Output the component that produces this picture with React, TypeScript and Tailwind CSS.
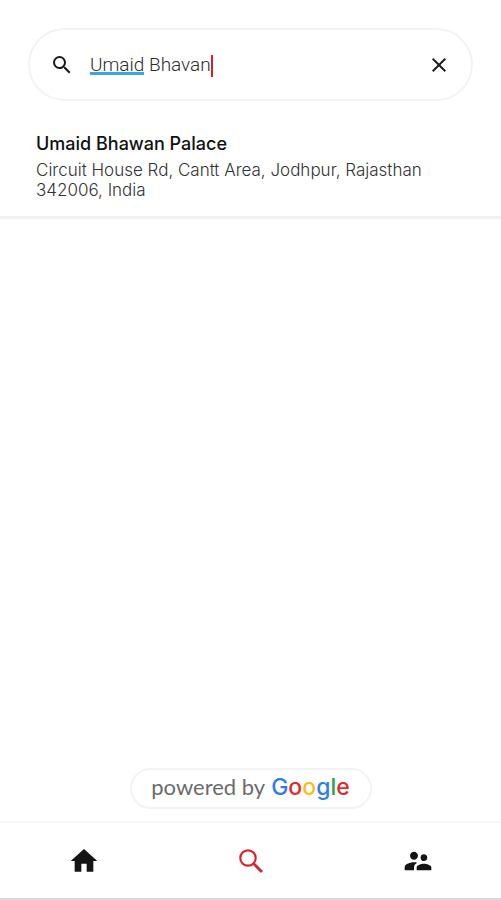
import { useState } from "react";
import { MdClose, MdHome, MdSearch, MdSupervisorAccount } from "react-icons/md";

const places = [
    {
        name: "Umaid Bhawan Palace",
        address: "Circuit House Rd, Cantt Area, Jodhpur, Rajasthan 342006, India",
    },
];

function SearchBar() {
    const [query, setQuery] = useState("Umaid Bhavan");
    const [first, ...rest] = query.split(" ");

    return (
        <form
            className="mx-7 mt-7 flex h-[73px] items-center rounded-full border-2 border-[#f3f3f3] px-5"
            onSubmit={(e) => e.preventDefault()}
        >
            <MdSearch className="size-6 shrink-0 text-[#1a1a1a]" />
            <div className="relative ml-4 h-7 min-w-0 flex-1 font-['Roboto',sans-serif] text-[19px] leading-7 font-light">
                <input
                    aria-label="Search for a place"
                    className="block h-7 w-full bg-transparent text-[#2c2c2c] caret-[#d8202c] outline-none"
                    onChange={(e) => setQuery(e.target.value)}
                    type="text"
                    value={query}
                />
                {/* spelling mark and caret, laid over the typed text */}
                <div aria-hidden="true" className="pointer-events-none absolute inset-0 flex whitespace-pre">
                    <span className="relative text-transparent">
                        {first}
                        <span className="absolute inset-x-0 bottom-1 h-[3px] bg-[#35a9e6]" />
                    </span>
                    <span className="text-transparent">{rest.length > 0 && ` ${rest.join(" ")}`}</span>
                    <span className="mt-1 h-[22px] w-[2px] bg-[#d8202c]" />
                </div>
            </div>
            <button aria-label="Clear" onClick={() => setQuery("")} type="button">
                <MdClose className="size-6 text-[#1f1f1f]" />
            </button>
        </form>
    );
}

function PoweredByGoogle() {
    return (
        <div className="mx-auto mb-3 flex h-[41px] w-[242px] items-center justify-center rounded-full border-2 border-[#f3f3f3] pb-1">
            <p className="flex items-baseline gap-1.5 whitespace-nowrap">
                <span className="font-['Lato',sans-serif] text-[22px] leading-7 text-[#6b6b6b]">powered by</span>
                <span className="font-['Inter',sans-serif] text-[23px] leading-7 font-medium">
                    <span className="text-[#2f7de9]">G</span>
                    <span className="text-[#e02b2b]">o</span>
                    <span className="text-[#fbbc1a]">o</span>
                    <span className="text-[#2f7de9]">g</span>
                    <span className="text-[#30a050]">l</span>
                    <span className="text-[#e02b2b]">e</span>
                </span>
            </p>
        </div>
    );
}

function BottomNav() {
    return (
        <nav className="grid h-[79px] grid-cols-3 border-t-2 border-b-2 border-t-[#f8f8f8] border-b-[#d9d9d9]">
            <a aria-label="Home" className="flex items-center justify-center" href="#home">
                <MdHome className="size-8 text-[#141414]" />
            </a>
            <a aria-current="page" aria-label="Search" className="flex items-center justify-center" href="#search">
                <svg className="size-6 text-[#d8232a]" fill="none" stroke="currentColor" viewBox="0 0 24 24">
                    <circle cx="9" cy="9" r="7.7" strokeWidth="2.2" />
                    <path d="M14.8 14.8 23 23" strokeWidth="2.8" />
                </svg>
            </a>
            <a aria-label="People" className="flex items-center justify-center" href="#people">
                <MdSupervisorAccount className="size-8 text-[#141414]" />
            </a>
        </nav>
    );
}

export default function App() {
    return (
        <div className="flex min-h-screen flex-col bg-white">
            <SearchBar />
            <ul className="mt-[29px] flex-1 font-['Inter',sans-serif]">
                {places.map((place) => (
                    <li className="border-b-[3px] border-[#f0f0f0] pb-4" key={place.name}>
                        <button className="block w-full px-9 text-left" type="button">
                            <span className="block text-lg leading-7 font-medium text-[#111111]">{place.name}</span>
                            <span className="mt-0.5 block text-[17px] leading-5 font-light text-[#333333]">
                                {place.address}
                            </span>
                        </button>
                    </li>
                ))}
            </ul>
            <PoweredByGoogle />
            <BottomNav />
        </div>
    );
}
